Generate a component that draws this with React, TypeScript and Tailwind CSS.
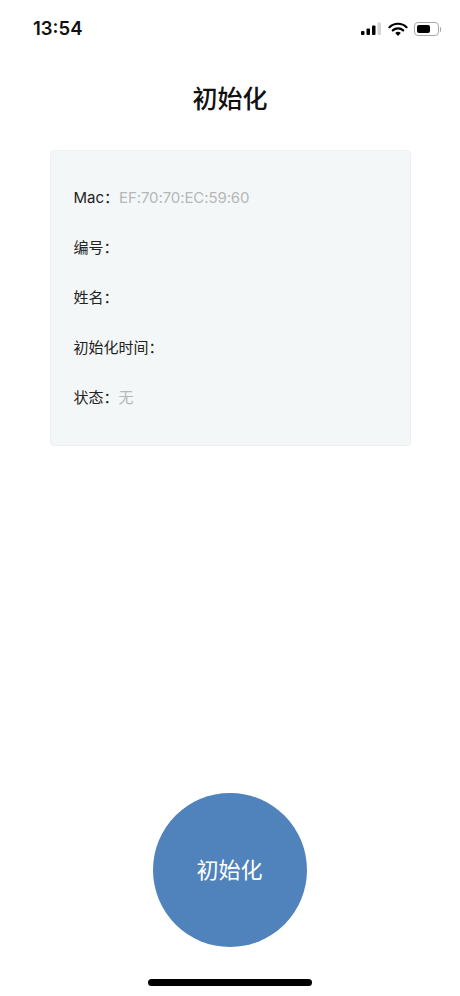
const FONT = "font-['Inter','Noto_Sans_CJK_SC',sans-serif]";

const ROWS: { label: string; value?: string }[] = [
  { label: "Mac：", value: "EF:70:70:EC:59:60" },
  { label: "编号：" },
  { label: "姓名：" },
  { label: "初始化时间：" },
  { label: "状态：", value: "无" },
];

function StatusIcons() {
  return (
    <div className="flex items-center gap-[5px]">
      <svg width="21" height="14" viewBox="0 0 21 14" className="text-black">
        <rect x="0" y="9" width="3.5" height="4" rx="1" fill="currentColor" />
        <rect x="5.5" y="6.5" width="3.5" height="6.5" rx="1" fill="currentColor" />
        <rect x="11" y="3.5" width="3.5" height="9.5" rx="1" fill="currentColor" />
        <rect x="16.5" y="0.5" width="3.5" height="12.5" rx="1" fill="#d4d4d4" />
      </svg>
      <svg width="20" height="15" viewBox="0 0 20 15" className="ml-[1px]">
        <path d="M1.5 5.2a12.2 12.2 0 0 1 17 0" fill="none" stroke="black" strokeWidth="2.2" strokeLinecap="round" />
        <path d="M4.8 8.4a7.6 7.6 0 0 1 10.4 0" fill="none" stroke="black" strokeWidth="2.2" strokeLinecap="round" />
        <path d="M7.2 11a3.9 3.9 0 0 1 5.6 0L10 14z" fill="black" />
      </svg>
      <div className="flex items-center ml-[1px]">
        <div className="w-[25px] h-[14px] rounded-[4px] border border-[#a8a8a8] p-[2px]">
          <div className="w-[13px] h-full rounded-[2px] bg-black" />
        </div>
        <div className="w-[1.5px] h-[5px] ml-[1px] rounded-r-sm bg-[#a8a8a8]" />
      </div>
    </div>
  );
}

export default function App() {
  return (
    <div className={`${FONT} flex flex-col items-center w-[460px] h-[996px] bg-white overflow-hidden`}>
      <div className="flex items-center justify-between w-full h-[58px] pl-[33px] pr-[19px]">
        <span className="text-[18.5px] font-semibold text-[#111]">13:54</span>
        <StatusIcons />
      </div>

      <h1 className="mt-[23px] h-[36px] text-[25px] leading-[36px] font-medium text-[#111]">初始化</h1>

      <div className="mt-[33px] w-[361px] py-[22px] px-[23px] rounded-[4px] bg-[#f4f7f7] border border-[#eef0f0]">
        {ROWS.map((row) => (
          <div key={row.label} className="flex items-center h-[50px] text-[15px] text-[#222]">
            <span>{row.label}</span>
            {row.value && <span className="text-[#b4b8b8] tracking-[-0.1px]">{row.value}</span>}
          </div>
        ))}
      </div>

      <button className="mt-auto w-[154px] h-[154px] rounded-full bg-[#5082bb] text-white text-[22px] pr-[1px]">初始化</button>

      <div className="mt-[32px] mb-[10px] w-[164px] h-[7px] rounded-full bg-black" />
    </div>
  );
}
